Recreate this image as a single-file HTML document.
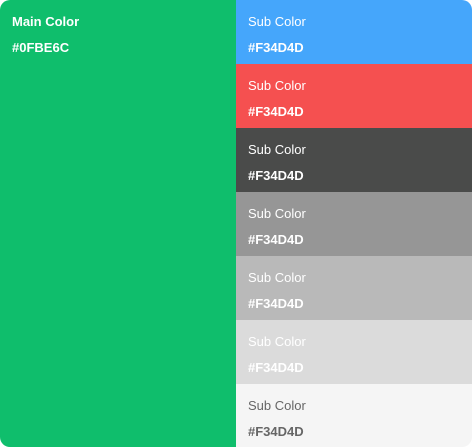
<!DOCTYPE html>
<html><head><style>
body{margin:0;width:472px;height:447px;overflow:hidden;background:#fff;font-family:"Liberation Sans",sans-serif;}
.wrap{position:absolute;left:0;top:0;width:472px;height:447px;border-radius:10px;overflow:hidden;}
.main{position:absolute;left:0;top:0;width:236px;height:447px;background:#0FBE6C;color:#fff;}
.row{position:absolute;left:236px;width:236px;height:64px;color:#fff;}
.t1{position:absolute;left:12px;top:14px;font-size:13px;}
.t2{position:absolute;left:12px;top:40px;font-size:13px;font-weight:bold;}
</style></head><body><div class="wrap">
<div class="main"><div class="t1" style="font-weight:bold">Main Color</div><div class="t2">#0FBE6C</div></div>
<div class="row" style="top:0;background:#45A6FB"><div class="t1">Sub Color</div><div class="t2">#F34D4D</div></div>
<div class="row" style="top:64px;background:#F55050"><div class="t1">Sub Color</div><div class="t2">#F34D4D</div></div>
<div class="row" style="top:128px;background:#4A4B4A"><div class="t1">Sub Color</div><div class="t2">#F34D4D</div></div>
<div class="row" style="top:192px;background:#969696"><div class="t1">Sub Color</div><div class="t2">#F34D4D</div></div>
<div class="row" style="top:256px;background:#B9B9B9"><div class="t1">Sub Color</div><div class="t2">#F34D4D</div></div>
<div class="row" style="top:320px;background:#DBDBDB"><div class="t1">Sub Color</div><div class="t2">#F34D4D</div></div>
<div class="row" style="top:384px;height:63px;background:#F5F5F5;color:#666"><div class="t1">Sub Color</div><div class="t2">#F34D4D</div></div>
</div></body></html>
